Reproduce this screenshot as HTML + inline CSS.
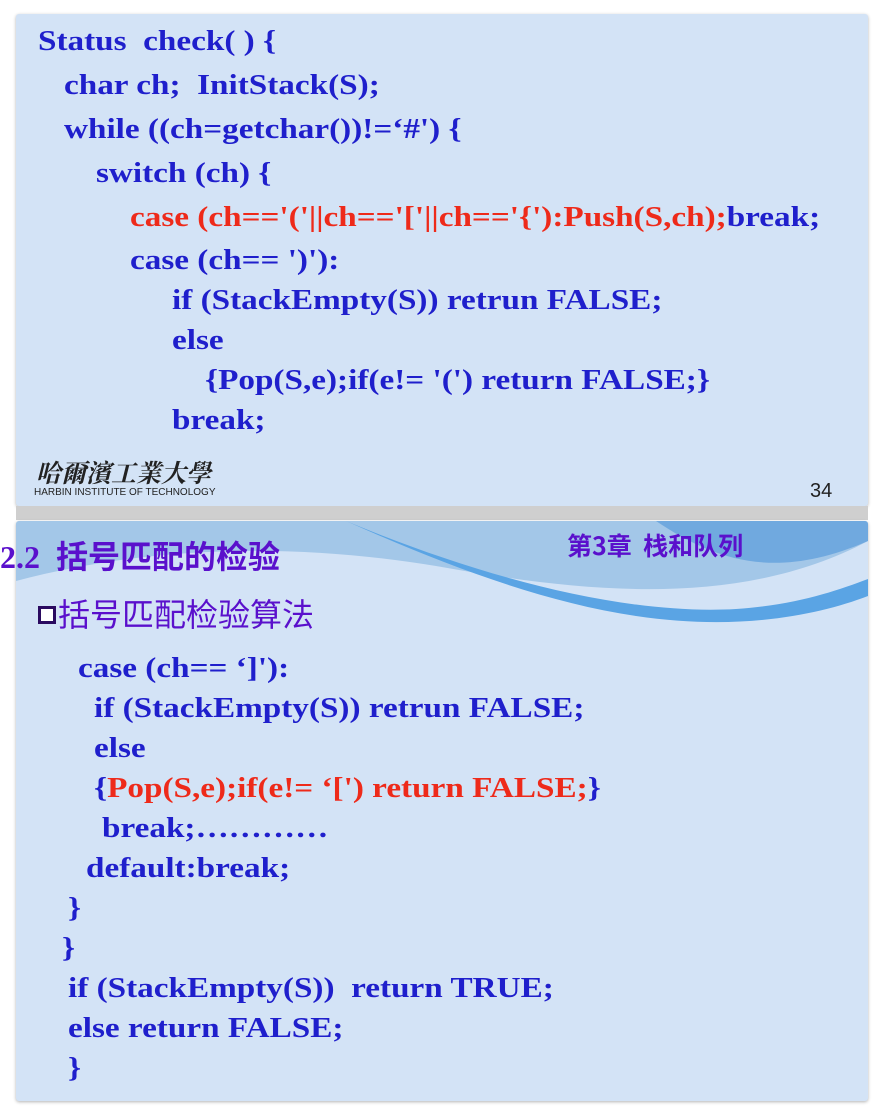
<!DOCTYPE html><html><head><style>
body{margin:0;width:884px;height:1116px;background:#fff;position:relative;overflow:hidden;font-family:"Liberation Serif","Noto Serif CJK SC",serif}
.s{position:absolute;left:16px;width:852px;background:#d3e3f6;border-radius:3px;box-shadow:0 1px 3px rgba(0,0,0,.3)}
.t{position:absolute;white-space:pre;font-weight:bold;font-size:29px;color:#1f1fcc;line-height:34px;transform:scale(1.145,1);transform-origin:0 0}
.r{color:#ee2a1a}
</style></head><body>
<div class="s" style="top:14px;height:492px"></div>
<div style="position:absolute;left:16px;top:506px;width:852px;height:14px;background:#cfcfcf"></div>
<div class="s" style="top:521px;height:580px;overflow:hidden">
<svg width="852" height="110" style="position:absolute;left:0;top:0"><path d="M0 0 H852 V20 C720 90 560 70 420 45 C300 25 150 20 0 60Z" fill="#8fbbe2" opacity=".7"/><path d="M640 0 C700 40 760 60 852 20 V0Z" fill="#4f95d8" opacity=".6"/><path d="M330 0 C450 50 600 95 720 88 C780 84 820 70 852 58 V75 C800 95 720 110 620 95 C520 80 420 40 330 0Z" fill="#5aa4e4"/></svg>
</div>
<div class="t" style="left:38px;top:24px">Status  check( ) {</div>
<div class="t" style="left:64px;top:68px">char ch;  InitStack(S);</div>
<div class="t" style="left:64px;top:112px">while ((ch=getchar())!=‘#') {</div>
<div class="t" style="left:96px;top:156px">switch (ch) {</div>
<div class="t" style="left:130px;top:200px"><span class="r">case (ch=='('||ch=='['||ch=='{'):Push(S,ch);</span>break;</div>
<div class="t" style="left:130px;top:243px">case (ch== ')'):</div>
<div class="t" style="left:172px;top:283px">if (StackEmpty(S)) retrun FALSE;</div>
<div class="t" style="left:172px;top:323px">else</div>
<div class="t" style="left:205px;top:363px">{Pop(S,e);if(e!= '(') return FALSE;}</div>
<div class="t" style="left:172px;top:403px">break;</div>
<div style="position:absolute;left:36px;top:454px;font:bold 25px 'Noto Serif CJK SC',serif;color:#222;font-style:italic">哈爾濱工業大學</div>
<div style="position:absolute;left:34px;top:487px;font:10px 'Liberation Sans',sans-serif;color:#222">HARBIN INSTITUTE OF TECHNOLOGY</div>
<div style="position:absolute;left:810px;top:480px;font:20px 'Liberation Sans',sans-serif;color:#222">34</div>
<div style="position:absolute;left:0px;top:532px;font:bold 32px 'Liberation Serif','Noto Sans CJK SC',sans-serif;color:#5a10cc;white-space:pre">2.2  括号匹配的检验</div>
<div style="position:absolute;left:567px;top:527px;font:bold 25px 'Noto Sans CJK SC',sans-serif;color:#5a10cc;white-space:pre">第3章  栈和队列</div>
<div style="position:absolute;left:38px;top:594px;font:32px 'Noto Sans CJK SC',sans-serif;color:#5a10cc;line-height:38px"><span style="display:inline-block;width:18px;height:18px;border:3px solid #2a0a60;background:#fff;vertical-align:2px;box-sizing:border-box;margin-right:2px"></span>括号匹配检验算法</div>
<div class="t" style="left:78px;top:651px">case (ch== ‘]'):</div>
<div class="t" style="left:94px;top:691px">if (StackEmpty(S)) retrun FALSE;</div>
<div class="t" style="left:94px;top:731px">else</div>
<div class="t" style="left:94px;top:771px">{<span class="r">Pop(S,e);if(e!= ‘[') return FALSE;</span>}</div>
<div class="t" style="left:102px;top:811px">break;…………</div>
<div class="t" style="left:86px;top:851px">default:break;</div>
<div class="t" style="left:68px;top:891px">}</div>
<div class="t" style="left:62px;top:931px">}</div>
<div class="t" style="left:68px;top:971px">if (StackEmpty(S))  return TRUE;</div>
<div class="t" style="left:68px;top:1011px">else return FALSE;</div>
<div class="t" style="left:68px;top:1051px">}</div>
</body></html>
